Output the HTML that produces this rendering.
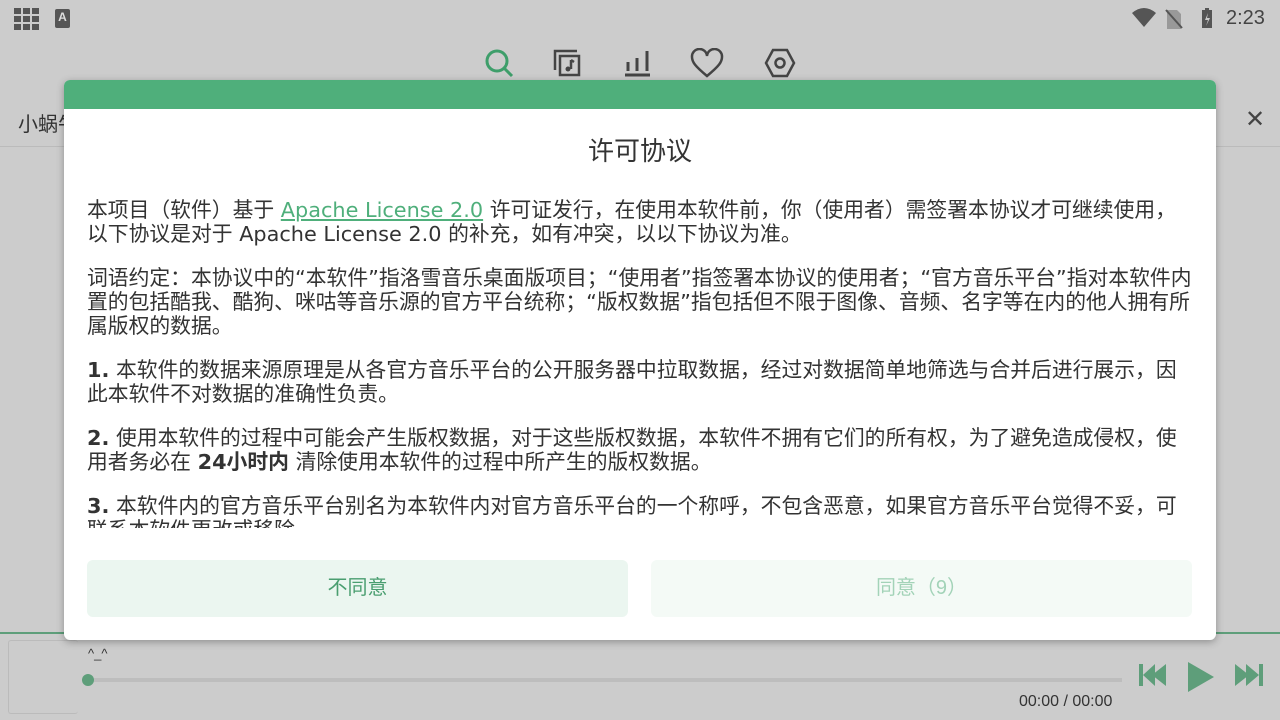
<!DOCTYPE html>
<html><head><meta charset="utf-8"><style>
*{margin:0;padding:0;box-sizing:border-box}
body{width:1280px;height:720px;background:#cccccc;position:relative;overflow:hidden;font-family:"Liberation Sans","Noto Sans CJK SC",sans-serif;color:#333}
.abs{position:absolute}
.dlg{position:absolute;left:64px;top:80px;width:1152px;height:560px;background:#fff;border-radius:6px;overflow:hidden;box-shadow:0 2px 8px rgba(0,0,0,.3)}
.hdr{height:29px;background:#4faf7b}
.title{position:absolute;left:0;right:0;text-align:center;font-size:26px;line-height:34px;color:#333}
.cnt{position:absolute;left:23px;top:118px;width:1120px;height:330px;overflow:hidden;font-family:"DejaVu Sans","Noto Sans CJK SC",sans-serif;font-size:20.8px;line-height:24px;color:#333;white-space:nowrap}
.cnt p{margin-bottom:20px}
.cnt a{color:#4faf7b;text-decoration:underline}
.btn{position:absolute;top:480px;height:57px;width:541px;border-radius:6px;text-align:center;line-height:57px;font-size:20px}
</style></head><body>
<svg class="abs" style="left:14px;top:8px" width="26" height="22" viewBox="0 0 26 22" fill="#555"><rect x="0" y="0" width="7" height="6"/><rect x="9" y="0" width="7" height="6"/><rect x="18" y="0" width="7" height="6"/><rect x="0" y="8" width="7" height="6"/><rect x="9" y="8" width="7" height="6"/><rect x="18" y="8" width="7" height="6"/><rect x="0" y="16" width="7" height="6"/><rect x="9" y="16" width="7" height="6"/><rect x="18" y="16" width="7" height="6"/></svg>
<div class="abs" style="left:55px;top:9px;width:15px;height:19px;background:#555;border-radius:2px;color:#ddd;font-size:12px;font-weight:bold;text-align:center;line-height:17px">A</div>
<svg class="abs" style="left:1132px;top:7px" width="90" height="22" viewBox="0 0 90 22"><path d="M0 6 Q12 -4 24 6 L12 20Z" fill="#555"/><path d="M35 3h10l4 4v15h-14z" fill="#999"/><path d="M34 3 L50 21" stroke="#555" stroke-width="2"/><rect x="70" y="3" width="10" height="18" fill="#555"/><rect x="73" y="1" width="4" height="3" fill="#555"/><path d="M76 6l-3 7h3l-2 6 4-8h-3z" fill="#ccc"/></svg>
<div class="abs" style="left:1226px;top:7px;font-size:20px;color:#444">2:23</div>
<svg class="abs" style="left:484px;top:48px" width="32" height="32" viewBox="0 0 32 32" fill="none" stroke="#3e9e6a" stroke-width="3"><circle cx="13" cy="13" r="10"/><path d="M20 20l8 8"/></svg>
<svg class="abs" style="left:552px;top:48px" width="30" height="30" viewBox="0 0 30 30" fill="none" stroke="#444" stroke-width="2.5"><path d="M3 22V3h22"/><rect x="8" y="8" width="19" height="19"/><path d="M19 12v9" /><circle cx="16" cy="21" r="2.5" fill="#444" stroke="none"/><path d="M19 12l3 2"/></svg>
<svg class="abs" style="left:622px;top:48px" width="30" height="30" viewBox="0 0 30 30" fill="none" stroke="#444" stroke-width="3"><path d="M3 27h25M6 14v9M15 10v13M25 3v20"/></svg>
<svg class="abs" style="left:690px;top:48px" width="34" height="30" viewBox="0 0 34 30" fill="none" stroke="#444" stroke-width="2.5"><path d="M17 28C5 18 2 14 2 9a7.5 7.5 0 0 1 15-1 7.5 7.5 0 0 1 15 1c0 5-3 9-15 19z"/></svg>
<svg class="abs" style="left:764px;top:48px" width="32" height="30" viewBox="0 0 32 30" fill="none" stroke="#444" stroke-width="2.5"><path d="M9 2h14l7 13-7 13H9L2 15z"/><circle cx="16" cy="15" r="4.5"/></svg>
<div class="abs" style="left:0;top:146px;width:1280px;height:1px;background:#bbb"></div>
<div class="abs" style="left:18px;top:108px;font-size:20px;color:#333">小蜗牛</div>
<div class="abs" style="left:1245px;top:105px;font-size:24px;color:#444">✕</div>
<div class="abs" style="left:0;top:632px;width:1280px;height:2px;background:#5e9e7a"></div>
<div class="abs" style="left:8px;top:640px;width:70px;height:74px;border:1px solid #bbb;border-right:none;border-radius:3px"></div>
<div class="abs" style="left:88px;top:646px;font-size:13px;color:#333">^_^</div>
<div class="abs" style="left:88px;top:678px;width:1034px;height:4px;background:#bdbdbd"></div>
<div class="abs" style="left:82px;top:674px;width:12px;height:12px;border-radius:6px;background:#5e9e7a"></div>
<div class="abs" style="left:1019px;top:693px;font-size:16px;color:#333">00:00 / 00:00</div>
<svg class="abs" style="left:1138px;top:660px" width="30" height="30" viewBox="0 0 30 30" fill="#5e9e7a"><rect x="1" y="4" width="4" height="22"/><path d="M5 15l12-11v22z"/><path d="M14 15l14-11v22z"/></svg>
<svg class="abs" style="left:1186px;top:660px" width="30" height="34" viewBox="0 0 30 34" fill="#5e9e7a"><path d="M2 2l26 15-26 15z"/></svg>
<svg class="abs" style="left:1234px;top:660px" width="30" height="30" viewBox="0 0 30 30" fill="#5e9e7a"><path d="M1 4l14 11-14 11z"/><path d="M12 4l13 11-13 11z"/><rect x="25" y="4" width="4" height="22"/></svg>
<div class="dlg">
<div class="hdr"></div>
<div class="title" style="top:54px">许可协议</div>
<div class="cnt">
<p>本项目（软件）基于 <a>Apache License 2.0</a> 许可证发行，在使用本软件前，你（使用者）需签署本协议才可继续使用，<br>以下协议是对于 Apache License 2.0 的补充，如有冲突，以以下协议为准。</p>
<p>词语约定：本协议中的“本软件”指洛雪音乐桌面版项目；“使用者”指签署本协议的使用者；“官方音乐平台”指对本软件内<br>置的包括酷我、酷狗、咪咕等音乐源的官方平台统称；“版权数据”指包括但不限于图像、音频、名字等在内的他人拥有所<br>属版权的数据。</p>
<p><b>1.</b> 本软件的数据来源原理是从各官方音乐平台的公开服务器中拉取数据，经过对数据简单地筛选与合并后进行展示，因<br>此本软件不对数据的准确性负责。</p>
<p><b>2.</b> 使用本软件的过程中可能会产生版权数据，对于这些版权数据，本软件不拥有它们的所有权，为了避免造成侵权，使<br>用者务必在 <b>24小时内</b> 清除使用本软件的过程中所产生的版权数据。</p>
<p><b>3.</b> 本软件内的官方音乐平台别名为本软件内对官方音乐平台的一个称呼，不包含恶意，如果官方音乐平台觉得不妥，可<br>联系本软件更改或移除。</p>
</div>
<div class="btn" style="left:23px;background:#ebf6f0;color:#4a9e70">不同意</div>
<div class="btn" style="left:587px;background:#f4faf6;color:#a3d3b8">同意（9）</div>
</div>
</body></html>
